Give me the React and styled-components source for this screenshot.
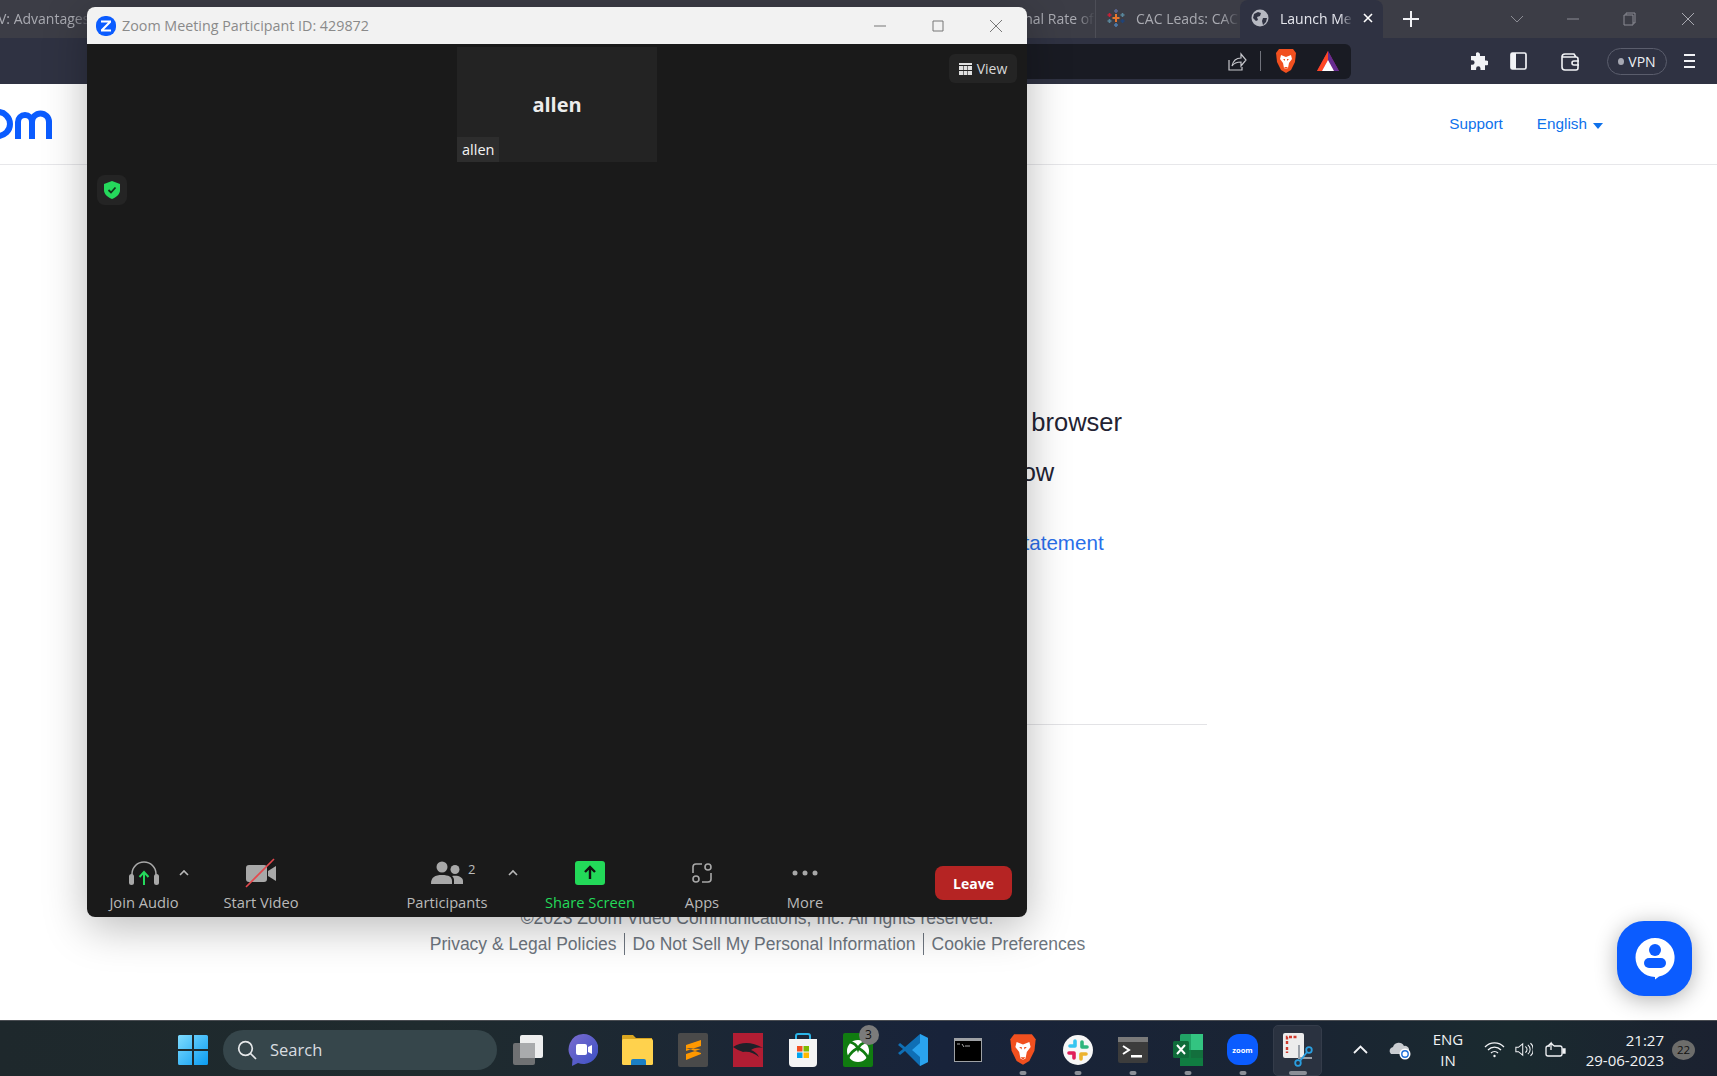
import React from 'react';
import styled, { createGlobalStyle } from 'styled-components';

const Global = createGlobalStyle`
  html, body { margin: 0; padding: 0; width: 1717px; height: 1076px; overflow: hidden; background: #fff; }
  * { box-sizing: border-box; }
`;

const Desktop = styled.div`
  position: relative; width: 1717px; height: 1076px; overflow: hidden;
  display: flex; flex-direction: column; font-family: "Liberation Sans", Arial, sans-serif;
`;

/* ---------- browser chrome ---------- */
const TabStrip = styled.div`
  height: 38px; flex: none; background: #3c3d46; display: flex; align-items: stretch;
  font-family: "Open Sans", sans-serif; font-size: 14px; color: #b4b5bb;
`;
const Tab = styled.div`
  width: ${p => p.$w}px; flex: none; display: flex; align-items: center; gap: ${p => p.$gap || 0}px;
  padding: 0 0 2px ${p => p.$pl || 0}px; overflow: hidden; white-space: nowrap; position: relative;
  background: ${p => (p.$active ? '#2f3242' : 'transparent')};
  color: ${p => (p.$active ? '#e6e7ee' : '#a9aab1')};
  border-radius: ${p => (p.$active ? '8px 8px 0 0' : '0')};
  border-right: ${p => (p.$sep ? '1px solid #4d4e57' : '0')};
`;
const TabTitle = styled.span`
  flex: 1; min-width: 0; overflow: hidden; white-space: nowrap; margin-left: ${p => p.$ml || 0}px;
  mask-image: linear-gradient(90deg, #000 82%, transparent 100%);
`;
const TabClose = styled.div`
  width: 30px; flex: none; margin-left: -11px; display: flex; align-items: center; justify-content: center;
`;
const TabGap = styled.div` width: ${p => p.$w}px; flex: none; `;
const StripButton = styled.div`
  width: ${p => p.$w}px; flex: none; display: flex; align-items: center; justify-content: center;
`;
const NavBar = styled.div`
  height: 46px; flex: none; background: #2f3242; display: flex; align-items: center;
`;
const AddressBar = styled.div`
  margin-left: 90px; width: 1261px; height: 35px; background: #191b23; border-radius: 0 6px 6px 0;
  display: flex; align-items: center; justify-content: flex-end;
`;
const AddrSlot = styled.div`
  width: ${p => p.$w}px; flex: none; display: flex; align-items: center; justify-content: center;
`;
const AddrDivider = styled.div` width: 1px; height: 20px; background: #71737c; margin: 0 6px 0 8px; `;
const NavTools = styled.div`
  flex: 1; display: flex; align-items: center; padding-left: 112px;
`;
const NavSlot = styled.div`
  width: ${p => p.$w}px; flex: none; display: flex; align-items: center; justify-content: center;
`;
const VpnPill = styled.div`
  width: 60px; height: 27px; border: 1px solid #5a5d6c; border-radius: 14px; display: flex; align-items: center;
  justify-content: center; gap: 4px; color: #eef0f5; font-size: 14px; font-family: "Open Sans", sans-serif;
  margin: 0 15px 0 12px;
  &::before { content: ''; width: 6px; height: 7px; border-radius: 50%; background: #a6a8b2; }
`;

/* ---------- web page ---------- */
const WebPage = styled.main`
  flex: 1; min-height: 0; background: #fff; display: flex; flex-direction: column;
`;
const PageHeader = styled.header`
  height: 81px; flex: none; border-bottom: 1px solid #e7e7ea; display: flex; align-items: center;
  padding-right: 114px; color: #0e71eb; font-size: 15.3px;
`;
const HeaderSpacer = styled.div` flex: 1; `;
const HeaderLink = styled.a` margin-left: 34px; display: flex; align-items: center; gap: 6px; `;
const Caret = styled.span`
  width: 0; height: 0; border: 5px solid transparent; border-top: 6px solid #0e71eb; border-bottom: 0; margin-top: 3px;
`;
const Content = styled.section`
  margin-left: 307px; width: 900px; text-align: center; flex: 1; display: flex; flex-direction: column;
  padding-top: 242px;
`;
const Line = styled.p`
  margin: 0 0 ${p => p.$mb}px; font-size: 25.5px; line-height: 30px; color: #232333; white-space: nowrap;
`;
const Legal = styled.p`
  margin: 0; font-size: 20.6px; line-height: 24px; color: #232333; white-space: nowrap;
`;
const Anchor = styled.a` color: #2a6fea; `;
const Rule = styled.hr` margin: 169px 0 0; border: 0; border-top: 1px solid #e3e3e6; `;
const Copyright = styled.p`
  margin: 183px 0 0; font-size: 17.5px; line-height: 20px; color: #6e7680; white-space: nowrap;
`;
const FooterLinks = styled.div`
  margin-top: 5px; display: flex; justify-content: center; font-size: 17.5px; line-height: 22px; color: #6e7680; white-space: nowrap;
`;
const FooterLink = styled.a`
  padding: 0 7px 0 8px; border-left: ${p => (p.$first ? '0' : '1px solid #6e7680')};
`;
const ChatBubble = styled.div`
  position: absolute; left: 1617px; top: 921px; width: 75px; height: 75px; border-radius: 27px; background: #0b5cff;
  box-shadow: 0 4px 22px rgba(0,0,0,.3); display: flex; align-items: center; justify-content: center;
`;

/* ---------- zoom window ---------- */
const ZoomWindow = styled.div`
  position: absolute; left: 87px; top: 7px; width: 940px; height: 910px; border-radius: 8px; overflow: hidden;
  display: flex; flex-direction: column; background: #1a1a1a; font-family: "Open Sans", sans-serif;
`;
const WindowShadow = styled.div`
  position: absolute; left: 87px; top: 7px; width: 940px; height: 910px; border-radius: 8px;
  box-shadow: 0 10px 44px rgba(0,0,0,.28);
`;
const TitleBar = styled.div`
  height: 37px; flex: none; background: #f2f2f2; display: flex; align-items: center; padding: 0 2px 0 9px; gap: 6px;
  color: #8a8a8a; font-size: 14.3px;
`;
const WindowTitle = styled.span` flex: 1; `;
const WinControls = styled.div` display: flex; `;
const WinControl = styled.div`
  width: 58px; height: 37px; display: flex; align-items: center; justify-content: center;
`;
const Stage = styled.div`
  flex: 1; min-height: 0; position: relative; display: flex; flex-direction: column; align-items: center; padding-top: 3px;
`;
const VideoTile = styled.div`
  position: relative; width: 200px; height: 115px; background: #232323; color: #ececec;
  display: flex; align-items: center; justify-content: center; font-size: 20px; font-weight: 700;
`;
const TileName = styled.span`
  position: absolute; left: 0; bottom: 0; height: 25px; padding: 0 5px; background: #2d2d2d; color: #f4f4f4;
  font-size: 14.5px; font-weight: 400; line-height: 25px;
`;
const ViewButton = styled.div`
  position: absolute; left: 862px; top: 10px; width: 68px; height: 29px; border-radius: 6px; background: #242424;
  display: flex; align-items: center; justify-content: center; gap: 5px; color: #d8d8d8; font-size: 14px;
`;
const ShieldButton = styled.div`
  position: absolute; left: 10px; top: 131px; width: 30px; height: 30px; border-radius: 8px; background: #242424;
  display: flex; align-items: center; justify-content: center;
`;
const Toolbar = styled.div`
  height: 73px; flex: none; display: flex; align-items: flex-start; padding-top: 13px;
`;
const ToolButton = styled.div`
  position: relative; width: ${p => p.$w}px; margin-left: ${p => p.$ml || 0}px; flex: none; display: flex;
  flex-direction: column; align-items: center; color: ${p => p.$color || '#b9b9b9'}; font-size: 14.7px; font-weight: 500;
`;
const ToolIcon = styled.div` height: 32px; display: flex; align-items: center; justify-content: center; `;
const ToolLabel = styled.span` margin-top: 4px; line-height: 19px; white-space: nowrap; `;
const Chevron = styled.svg`
  position: absolute; left: ${p => p.$left}px; top: 12px;
`;
const Count = styled.span`
  position: absolute; left: 81px; top: 3px; font-size: 13px; color: #bcbcbc;
`;
const LeaveButton = styled.button`
  margin: 9px 0 0 82px; width: 77px; height: 34px; border: 0; border-radius: 8px; background: #b52423; color: #fff;
  font: 700 14px "Open Sans", sans-serif;
`;

/* ---------- taskbar ---------- */
const Taskbar = styled.footer`
  height: 56px; flex: none; border-top: 1px solid #4a4d52; padding-top: 2px;
  background: linear-gradient(90deg,#1e282c 0%,#1f2b2e 25%,#18233a 55%,#1a2433 75%,#1a2a2f 88%,#1b2130 100%);
  display: flex; align-items: center; padding-left: 165px; color: #f0f2f4; font-family: "Open Sans", sans-serif;
`;
const AppCell = styled.div`
  position: relative; width: 55px; height: 53px; flex: none; display: flex; align-items: center; justify-content: center;
  ${p => p.$running && `
    &::after { content:''; position:absolute; left:50%; bottom:1px; transform:translateX(-50%);
      width:${p.$current ? 18 : 7}px; height:4px; border-radius:2px; background:#8b8f97; }
  `}
  ${p => p.$current && `
    &::before { content:''; position:absolute; left:3px; right:3px; top:2px; bottom:0; border-radius:5px;
      background:#2a3240; border:1px solid #343c4a; }
    & > svg { position: relative; }
  `}
`;
const SearchBox = styled.div`
  width: 274px; height: 40px; margin: 0 3px; flex: none; border-radius: 20px; background: #36464b;
  display: flex; align-items: center; padding-left: 14px; gap: 13px; font-size: 16.5px; color: #d9dde0;
`;
const Tray = styled.div` flex: 1; display: flex; align-items: center; padding-left: 24px; `;
const TraySlot = styled.div`
  width: ${p => p.$w}px; margin-left: ${p => p.$ml || 0}px; flex: none; display: flex; align-items: center; justify-content: center;
`;
const Lang = styled.div`
  width: 50px; flex: none; text-align: center; font-size: 15px; line-height: 21px; margin-top: 1px;
`;
const Clock = styled.div`
  margin-left: 5px; width: 82px; flex: none; text-align: right; font-size: 15px; line-height: 20px; white-space: nowrap;
`;
const NotifBadge = styled.div`
  margin-left: 8px; width: 23px; height: 20px; flex: none; border-radius: 50%; background: #6d6d6b; color: #111;
  font-size: 11.5px; display: flex; align-items: center; justify-content: center;
`;
const XboxBadgeWrap = styled.div` position: relative; width: 30px; height: 34px; `;
const XboxBadge = styled.span`
  position: absolute; left: 16px; top: -8px; width: 20px; height: 20px; border-radius: 50%; background: #7b7b7b; color: #111;
  font-size: 12px; display: flex; align-items: center; justify-content: center;
`;
const ZoomApp = styled.div`
  width: 31px; height: 31px; border-radius: 12px; background: #0b5cff; color: #fff; font-size: 7.5px; font-weight: 700;
  display: flex; align-items: center; justify-content: center;
`;

/* ---------- drawings ---------- */
const ZoomLogo = () => (
  <svg width="54" height="40" viewBox="0 0 54 40" fill="none" stroke="#0b5cff" strokeWidth="6">
    <circle cx="-2" cy="20" r="12" />
    <path d="M18 35V18a7 7 0 0 1 14 0v17M32 18a7 7 0 0 1 17 0v17" />
  </svg>
);
const ZIcon = () => (
  <svg width="20" height="20" viewBox="0 0 20 20"><rect width="20" height="20" rx="9" fill="#0b5cff" />
    <path d="M5 4.500h10v2L8 13.500h7v2H5v-2l7-7H5z" fill="#fff" /></svg>
);
const Globe = () => (
  <svg width="18" height="18" viewBox="0 0 18 18"><circle cx="9" cy="9" r="8.500" fill="#b7b9c2" />
    <path d="M3 5l4-2 3 1-1 3-3 1 1 3-2 1-3-3zM12 9l4 0-1 4-3 3-1-4z" fill="#2f3242" /></svg>
);
const Tableau = () => (
  <svg width="20" height="20" viewBox="0 0 20 20" strokeWidth="1.600" fill="none">
    <path d="M10 6v8M6.500 10h7" stroke="#e8762d" strokeWidth="2" />
    <path d="M10 1v4M8 3h4" stroke="#5b6591" /><path d="M10 15v4M8 17h4" stroke="#4e7aa8" />
    <path d="M3.500 5v4M1.500 7h4" stroke="#c72037" /><path d="M16.500 5v4M14.500 7h4" stroke="#59879b" />
    <path d="M3.500 11v4M1.500 13h4" stroke="#5b879b" /><path d="M16.500 11v4M14.500 13h4" stroke="#1f447a" />
  </svg>
);
const Stroke = ({ w, h, d, c = '#c9cad0', sw = 1 }) => (
  <svg width={w} height={h} viewBox={`0 0 ${w} ${h}`} fill="none" stroke={c} strokeWidth={sw}><path d={d} /></svg>
);
const BraveLion = ({ s = 22 }) => (
  <svg width={s} height={s * 1.18} viewBox="0 0 22 26">
    <path d="M4 1h14l3 4-1 9-4 8-5 3-5-3-4-8-1-9z" fill="#f1501f" />
    <path d="M6 7l5 2 5-2 1 4-3 4-1 5-2 1-2-1-1-5-3-4z" fill="#fff" />
    <path d="M9 19h4l-2 2z" fill="#f1501f" /><path d="M8 11h2v2zM14 11h-2v2z" fill="#f1501f" />
  </svg>
);
const Bat = () => (
  <svg width="24" height="24" viewBox="0 0 24 24">
    <path d="M12 2l11 20H1z" fill="#9e1f63" /><path d="M12 2l11 20h-5L12 11z" fill="#662d91" />
    <path d="M12 2L1 22h5l6-11z" fill="#ff4724" /><path d="M12 11l6 11H6z" fill="#fff" />
  </svg>
);
const Share = () => (
  <svg width="20" height="20" viewBox="0 0 20 20" fill="none" stroke="#c6c7cc" strokeWidth="1.200">
    <path d="M2 9v10h13v-3" /><path d="M5 15c1-5 4-8 9-8V3l5 6-5 6v-4c-4 0-7 1-9 4z" />
  </svg>
);
const Puzzle = () => (
  <svg width="19" height="19" viewBox="0 0 19 19"><path d="M7 1a2.300 2.300 0 0 1 4 1.500V4h5v4.500h1.200a2.400 2.400 0 0 1 0 4.800H16V18h-4.500v-1.500a2.200 2.200 0 0 0-4.400 0V18H2v-5.200h1.300a2.300 2.300 0 0 0 0-4.600H2V4h5z" fill="#f2f3f6" /></svg>
);
const SidebarIcon = () => (
  <svg width="17" height="18" viewBox="0 0 17 18"><rect x="1" y="1" width="15" height="16" rx="1.500" fill="none" stroke="#f2f3f6" strokeWidth="1.700" /><rect x="1" y="1" width="5" height="16" fill="#f2f3f6" /></svg>
);
const Wallet = () => (
  <svg width="20" height="19" viewBox="0 0 20 19" fill="none" stroke="#f2f3f6" strokeWidth="1.600"><path d="M2 5V15a3 3 0 0 0 3 3h11a2 2 0 0 0 2-2V7a2 2 0 0 0-2-2H2zM2 5c0-2 1-3 3-3h9l2 3" /><path d="M19 9h-5a2 2 0 0 0 0 4h5" /></svg>
);
const Menu = () => <Stroke w={15} h={16} c="#f2f3f6" sw={2} d="M2 2h11M2 8h11M2 14h11" />;

const Headphones = () => (
  <svg width="32" height="28" viewBox="0 0 32 28" fill="none">
    <path d="M4 20V15a12 12 0 0 1 24 0v5" stroke="#a8a8a8" strokeWidth="1.600" />
    <rect x="1" y="15" width="5" height="11" rx="2.500" fill="#a8a8a8" /><rect x="26" y="15" width="5" height="11" rx="2.500" fill="#a8a8a8" />
    <path d="M16 26V14M11.500 18l4.500-5 4.500 5" stroke="#25d95c" strokeWidth="2" />
  </svg>
);
const VideoOff = () => (
  <svg width="32" height="30" viewBox="0 0 32 30">
    <rect x="1" y="7" width="21" height="17" rx="3" fill="#a8a8a8" /><path d="M23 13l8-5v15l-8-5z" fill="#a8a8a8" />
    <path d="M1 29L29 1" stroke="#e5484d" strokeWidth="1.600" />
  </svg>
);
const People = () => (
  <svg width="32" height="24" viewBox="0 0 32 24" fill="#a8a8a8">
    <circle cx="11" cy="6" r="5.500" /><circle cx="24" cy="8.500" r="4.500" />
    <path d="M0 23c0-7 4-9 11-9s10 2 10 6v3zM23 23v-4c0-2-1-3-2-4 6-1 11 1 11 5v3z" />
  </svg>
);
const ShareUp = () => (
  <svg width="30" height="24" viewBox="0 0 30 24"><rect width="30" height="24" rx="3" fill="#23d959" />
    <path d="M15 18V7M10 11l5-5 5 5" fill="none" stroke="#111" strokeWidth="2.400" /></svg>
);
const Apps = () => (
  <svg width="22" height="22" viewBox="0 0 22 22" fill="none" stroke="#a8a8a8" strokeWidth="1.600">
    <path d="M11 2H5a3 3 0 0 0-3 3v6M11 20h6a3 3 0 0 0 3-3v-6" /><circle cx="17" cy="5" r="3" /><circle cx="5" cy="17" r="3" />
  </svg>
);
const Dots = () => (
  <svg width="26" height="6" viewBox="0 0 26 6" fill="#a8a8a8"><circle cx="3" cy="3" r="2.500" /><circle cx="13" cy="3" r="2.500" /><circle cx="23" cy="3" r="2.500" /></svg>
);
const ToolChevron = ({ left }) => (
  <Chevron $left={left} width="10" height="7" viewBox="0 0 10 7" fill="none" stroke="#b9b9b9" strokeWidth="1.600"><path d="M1 6l4-4 4 4" /></Chevron>
);
const GridIcon = () => (
  <svg width="13" height="12" viewBox="0 0 13 12" fill="#e0e0e0"><rect width="13" height="2" y="0" /><rect x="0" y="3" width="4" height="4" /><rect x="4.600" y="3" width="3.800" height="4" /><rect x="9" y="3" width="4" height="4" /><rect x="0" y="8" width="4" height="4" /><rect x="4.600" y="8" width="3.800" height="4" /><rect x="9" y="8" width="4" height="4" /></svg>
);
const Shield = () => (
  <svg width="16" height="18" viewBox="0 0 16 18"><path d="M8 0l8 3v6c0 4-3 7-8 9-5-2-8-5-8-9V3z" fill="#25d95c" /><path d="M4.500 9l2.500 2.500L11.500 6.500" fill="none" stroke="#12331c" strokeWidth="1.800" /></svg>
);
const ChatGlyph = () => (
  <svg width="40" height="42" viewBox="0 0 40 42">
    <path d="M20 0a19.500 19.500 0 0 1 4 38.600L20 41.500v-2.500A19.500 19.500 0 0 1 20 0z" fill="#fff" />
    <circle cx="20" cy="12" r="6" fill="#0b5cff" /><rect x="9" y="20" width="22" height="10" rx="5" fill="#0b5cff" />
  </svg>
);

const WinStart = () => (
  <svg width="30" height="30" viewBox="0 0 30 30">
    <defs><linearGradient id="wg" x1="0" y1="0" x2="1" y2="1"><stop offset="0" stopColor="#7fdcff" /><stop offset="1" stopColor="#0a9bf0" /></linearGradient></defs>
    <path d="M0 1.500A1.500 1.500 0 0 1 1.500 0H14v14H0zM16 0h12.500A1.500 1.500 0 0 1 30 1.500V14H16zM0 16h14v14H1.500A1.500 1.500 0 0 1 0 28.500zM16 16h14v12.500a1.500 1.500 0 0 1-1.500 1.500H16z" fill="url(#wg)" />
  </svg>
);
const Magnifier = () => (
  <svg width="20" height="20" viewBox="0 0 20 20" fill="none" stroke="#e6e8ea" strokeWidth="1.700"><circle cx="8.500" cy="8.500" r="6.800" /><path d="M13.500 13.500l5.500 5.500" /></svg>
);
const TaskView = () => (
  <svg width="30" height="30" viewBox="0 0 30 30">
    <rect x="0" y="8" width="22" height="22" rx="2" fill="#6f7173" /><rect x="7" y="0" width="23" height="23" rx="2" fill="#fff" fillOpacity=".92" /><rect x="7" y="8" width="15" height="15" fill="#a9abad" />
  </svg>
);
const Meet = () => (
  <svg width="30" height="32" viewBox="0 0 30 32">
    <defs><linearGradient id="mg" x1="0" y1="0" x2="1" y2="1"><stop offset="0" stopColor="#7b6ccf" /><stop offset="1" stopColor="#3a50c4" /></linearGradient></defs>
    <path d="M15 0a15 15 0 1 1-5 29l-6 3 .500-7A15 15 0 0 1 15 0z" fill="url(#mg)" />
    <rect x="8" y="10" width="11" height="11" rx="2" fill="#fff" /><path d="M20 13l4-2v9l-4-2z" fill="#fff" />
  </svg>
);
const Folder = () => (
  <svg width="31" height="31" viewBox="0 0 31 31">
    <path d="M0 2a1 1 0 0 1 1-1h10l3 3h16v5H0z" fill="#d9a520" /><rect y="5" width="31" height="26" rx="1.500" fill="#ffd24d" /><path d="M9 27a2 2 0 0 1 2-2h11a2 2 0 0 1 2 2v4H9z" fill="#1b7fc4" />
  </svg>
);
const Sublime = () => (
  <svg width="30" height="34" viewBox="0 0 30 34">
    <rect width="30" height="34" rx="2" fill="#4a4a4a" />
    <path d="M8 12l15-5v6L8 18zM8 15l15 5v1L8 27v-6l15-5z" fill="#ff9800" />
  </svg>
);
const RedApp = () => (
  <svg width="30" height="34" viewBox="0 0 30 34">
    <rect width="30" height="34" fill="#b11d33" /><path d="M0 14c8-5 18-6 30 1-6-1-9 0-12 2 3 1 6 3 8 7-5-4-10-6-16-5-3-1-7-3-10-5z" fill="#1e2129" />
  </svg>
);
const Store = () => (
  <svg width="30" height="34" viewBox="0 0 30 34">
    <path d="M8 7V3a2 2 0 0 1 2-2h10a2 2 0 0 1 2 2v4" fill="none" stroke="#2bb5e8" strokeWidth="2" />
    <path d="M1 6h28v24a4 4 0 0 1-4 4H5a4 4 0 0 1-4-4z" fill="#f4f4f4" />
    <rect x="9" y="13" width="5.500" height="5.500" fill="#f25022" /><rect x="15.500" y="13" width="5.500" height="5.500" fill="#7fba00" />
    <rect x="9" y="19.500" width="5.500" height="5.500" fill="#00a4ef" /><rect x="15.500" y="19.500" width="5.500" height="5.500" fill="#ffb900" />
  </svg>
);
const Xbox = () => (
  <svg width="30" height="34" viewBox="0 0 30 34">
    <rect width="30" height="34" rx="2" fill="#107c10" /><circle cx="15" cy="18" r="11" fill="#fff" />
    <path d="M7 9c4 1 7 4 8 7 1-3 4-6 8-7M5 25c2-5 6-8 10-10 4 2 8 5 10 10" fill="none" stroke="#107c10" strokeWidth="2.600" />
  </svg>
);
const VSCode = () => (
  <svg width="30" height="34" viewBox="0 0 30 34">
    <path d="M22 1l8 4v24l-8 4L7 18l-5 4-2-2 5-4-5-4 2-2 5 4z" fill="#0f6fb5" />
    <path d="M22 1l8 4v24l-8 4zM22 10l-8 7 8 7z" fill="#2aa3ee" fillRule="evenodd" />
  </svg>
);
const Cmd = () => (
  <svg width="28" height="24" viewBox="0 0 28 24">
    <rect width="28" height="24" fill="#9ea1a5" /><rect x="1" y="3" width="26" height="20" fill="#000" /><path d="M3 6h3M8 6l2 3M11 8h5" stroke="#aaa" strokeWidth="1" />
  </svg>
);
const Slack = () => (
  <svg width="30" height="30" viewBox="0 0 30 30"><circle cx="15" cy="15" r="15" fill="#f7f7f7" />
    <g strokeWidth="3.600" strokeLinecap="round" fill="none">
      <path d="M12 6v5M12 11H7" stroke="#36c5f0" /><path d="M24 12h-5M19 12V7" stroke="#2eb67d" />
      <path d="M18 24v-5M18 19h5" stroke="#ecb22e" /><path d="M6 18h5M11 18v5" stroke="#e01e5a" />
    </g>
  </svg>
);
const TermApp = () => (
  <svg width="30" height="26" viewBox="0 0 30 26">
    <rect width="30" height="26" rx="2" fill="#3c3c3c" /><rect width="30" height="5" fill="#7a7a7a" />
    <path d="M5 9l6 4-6 4" fill="none" stroke="#fff" strokeWidth="2" /><rect x="13" y="18" width="11" height="2.500" fill="#fff" />
  </svg>
);
const Excel = () => (
  <svg width="30" height="32" viewBox="0 0 30 32">
    <rect x="7" y="0" width="23" height="32" rx="1.500" fill="#21a366" /><rect x="18" y="0" width="12" height="16" fill="#33c481" /><rect x="7" y="16" width="23" height="16" fill="#107c41" /><rect x="18" y="16" width="12" height="8" fill="#185c37" opacity=".4" />
    <rect x="0" y="7" width="16" height="17" rx="1.500" fill="#0f6b3a" /><path d="M4 11l8 9M12 11l-8 9" stroke="#fff" strokeWidth="2" />
  </svg>
);
const Snip = () => (
  <svg width="30" height="34" viewBox="0 0 30 34">
    <rect x="0" y="0" width="21" height="25" rx="2" fill="#ececec" />
    <path d="M4 11V4h10" fill="none" stroke="#cf3a2e" strokeWidth="2.400" strokeDasharray="3 1.500" /><path d="M4 14v6" stroke="#cf3a2e" strokeWidth="2.400" strokeDasharray="3 1.500" />
    <path d="M16 12v13h13" fill="none" stroke="#9aa0a8" strokeWidth="2" />
    <circle cx="26" cy="17" r="2.800" fill="none" stroke="#2a9fe0" strokeWidth="1.800" /><circle cx="15" cy="30" r="2.800" fill="none" stroke="#2a9fe0" strokeWidth="1.800" /><path d="M24 19l-7 9" stroke="#2a9fe0" strokeWidth="1.800" />
  </svg>
);
const Caretup = () => <Stroke w={15} h={9} c="#f2f3f6" sw={1.800} d="M1 8l6.500-6.500L14 8" />;
const OneDrive = () => (
  <svg width="22" height="20" viewBox="0 0 22 20">
    <path d="M2 14a4 4 0 0 1 2-7 6 6 0 0 1 11-1 4 4 0 0 1 2 8z" fill="#c9ccd0" />
    <circle cx="16" cy="14" r="5.500" fill="#fff" /><circle cx="16" cy="14" r="3.200" fill="none" stroke="#1f6fd8" strokeWidth="1.400" />
  </svg>
);
const Wifi = () => (
  <svg width="21" height="17" viewBox="0 0 21 17" fill="none" stroke="#f2f3f6" strokeWidth="1.300">
    <path d="M1 6a13 13 0 0 1 19 0M4 9a9 9 0 0 1 13 0M7 12a5 5 0 0 1 7 0" /><circle cx="10.500" cy="15" r="1.200" fill="#f2f3f6" stroke="none" />
  </svg>
);
const Speaker = () => (
  <svg width="21" height="17" viewBox="0 0 21 17" fill="none" stroke="#f2f3f6" strokeWidth="1.200">
    <path d="M1 6v5h3l5 4V2L4 6zM12 5a4 4 0 0 1 0 7M15 3a7 7 0 0 1 0 11M18 1a10 10 0 0 1 0 15" />
  </svg>
);
const Battery = () => (
  <svg width="21" height="17" viewBox="0 0 21 17" fill="none" stroke="#f2f3f6" strokeWidth="1.300">
    <path d="M5 5H3a2 2 0 0 0-2 2v6a2 2 0 0 0 2 2h12a2 2 0 0 0 2-2V7a2 2 0 0 0-2-2H9" /><path d="M18 8h2v4h-2z" fill="#f2f3f6" /><path d="M6 9V2L3 5M6 2l3 3" />
  </svg>
);

export default function App() {
  return (
    <Desktop>
      <Global />
      <TabStrip>
        <Tab $w={90}><TabTitle $ml={-2}>V: Advantages</TabTitle></Tab>
        <Tab $w={1006} $pl={897} $sep><TabTitle>Marginal Rate of</TabTitle></Tab>
        <Tab $w={144} $pl={10} $gap={10}><Tableau /><TabTitle>CAC Leads: CAC</TabTitle></Tab>
        <Tab $w={143} $pl={11} $gap={11} $active>
          <Globe /><TabTitle>Launch Me</TabTitle>
          <TabClose><Stroke w={10} h={10} c="#fff" sw={1.600} d="M1 1l8 8M9 1l-8 8" /></TabClose>
        </Tab>
        <StripButton $w={56}><Stroke w={16} h={16} c="#f2f3f6" sw={2} d="M8 0v16M0 8h16" /></StripButton>
        <TabGap $w={50} />
        <StripButton $w={56}><Stroke w={14} h={8} c="#8b8c94" d="M1 1l6 6 6-6" /></StripButton>
        <StripButton $w={56}><Stroke w={12} h={2} c="#8b8c94" d="M0 1h12" /></StripButton>
        <StripButton $w={57}><Stroke w={13} h={14} c="#8b8c94" d="M3 3V1h9v10h-2M1 3h9v10H1z" /></StripButton>
        <StripButton $w={59}><Stroke w={14} h={14} c="#a9aab1" d="M1 1l12 12M13 1L1 13" /></StripButton>
      </TabStrip>
      <NavBar>
        <AddressBar>
          <AddrSlot $w={30}><Share /></AddrSlot>
          <AddrDivider />
          <AddrSlot $w={38}><BraveLion /></AddrSlot>
          <AddrSlot $w={46}><Bat /></AddrSlot>
        </AddressBar>
        <NavTools>
          <NavSlot $w={30}><Puzzle /></NavSlot>
          <NavSlot $w={51}><SidebarIcon /></NavSlot>
          <NavSlot $w={51}><Wallet /></NavSlot>
          <VpnPill>VPN</VpnPill>
          <NavSlot $w={15}><Menu /></NavSlot>
        </NavTools>
      </NavBar>
      <WebPage>
        <PageHeader>
          <ZoomLogo />
          <HeaderSpacer />
          <HeaderLink>Support</HeaderLink>
          <HeaderLink>English<Caret /></HeaderLink>
        </PageHeader>
        <Content>
          <Line $mb={20}>Click Open Zoom Meetings on the dialog shown by your browser</Line>
          <Line $mb={44}>If you don't see a dialog, click Launch Meeting below</Line>
          <Legal>By joining the call, you agree to our <Anchor>Terms of Service and Privacy Statement</Anchor></Legal>
          <Rule />
          <Copyright>©2023 Zoom Video Communications, Inc. All rights reserved.</Copyright>
          <FooterLinks>
            <FooterLink $first>Privacy &amp; Legal Policies</FooterLink>
            <FooterLink>Do Not Sell My Personal Information</FooterLink>
            <FooterLink>Cookie Preferences</FooterLink>
          </FooterLinks>
        </Content>
      </WebPage>
      <Taskbar>
        <AppCell><WinStart /></AppCell>
        <SearchBox><Magnifier />Search</SearchBox>
        <AppCell><TaskView /></AppCell>
        <AppCell><Meet /></AppCell>
        <AppCell><Folder /></AppCell>
        <AppCell><Sublime /></AppCell>
        <AppCell><RedApp /></AppCell>
        <AppCell><Store /></AppCell>
        <AppCell><XboxBadgeWrap><Xbox /><XboxBadge>3</XboxBadge></XboxBadgeWrap></AppCell>
        <AppCell><VSCode /></AppCell>
        <AppCell><Cmd /></AppCell>
        <AppCell $running><BraveLion s={28} /></AppCell>
        <AppCell $running><Slack /></AppCell>
        <AppCell $running><TermApp /></AppCell>
        <AppCell $running><Excel /></AppCell>
        <AppCell $running><ZoomApp>zoom</ZoomApp></AppCell>
        <AppCell $running $current><Snip /></AppCell>
        <Tray>
          <TraySlot $w={22}><Caretup /></TraySlot>
          <TraySlot $w={46} $ml={6}><OneDrive /></TraySlot>
          <Lang>ENG<br />IN</Lang>
          <TraySlot $w={42}><Wifi /></TraySlot>
          <TraySlot $w={18}><Speaker /></TraySlot>
          <TraySlot $w={44}><Battery /></TraySlot>
          <Clock>21:27<br />29-06-2023</Clock>
          <NotifBadge>22</NotifBadge>
        </Tray>
      </Taskbar>
      <ChatBubble><ChatGlyph /></ChatBubble>
      <WindowShadow />
      <ZoomWindow>
        <TitleBar>
          <ZIcon />
          <WindowTitle>Zoom Meeting Participant ID: 429872</WindowTitle>
          <WinControls>
            <WinControl><Stroke w={12} h={2} c="#777" d="M0 1h12" /></WinControl>
            <WinControl><Stroke w={12} h={12} c="#777" d="M1 1h10v10H1z" /></WinControl>
            <WinControl><Stroke w={14} h={14} c="#777" d="M1 1l12 12M13 1L1 13" /></WinControl>
          </WinControls>
        </TitleBar>
        <Stage>
          <VideoTile>allen<TileName>allen</TileName></VideoTile>
          <ViewButton><GridIcon />View</ViewButton>
          <ShieldButton><Shield /></ShieldButton>
        </Stage>
        <Toolbar>
          <ToolButton $w={104} $ml={5}><ToolIcon><Headphones /></ToolIcon><ToolLabel>Join Audio</ToolLabel><ToolChevron left={87} /></ToolButton>
          <ToolButton $w={120} $ml={5}><ToolIcon><VideoOff /></ToolIcon><ToolLabel>Start Video</ToolLabel></ToolButton>
          <ToolButton $w={120} $ml={66}><ToolIcon><People /></ToolIcon><ToolLabel>Participants</ToolLabel><Count>2</Count><ToolChevron left={121} /></ToolButton>
          <ToolButton $w={136} $ml={15} $color="#23d959"><ToolIcon><ShareUp /></ToolIcon><ToolLabel>Share Screen</ToolLabel></ToolButton>
          <ToolButton $w={88}><ToolIcon><Apps /></ToolIcon><ToolLabel>Apps</ToolLabel></ToolButton>
          <ToolButton $w={96} $ml={11}><ToolIcon><Dots /></ToolIcon><ToolLabel>More</ToolLabel></ToolButton>
          <LeaveButton>Leave</LeaveButton>
        </Toolbar>
      </ZoomWindow>
    </Desktop>
  );
}
